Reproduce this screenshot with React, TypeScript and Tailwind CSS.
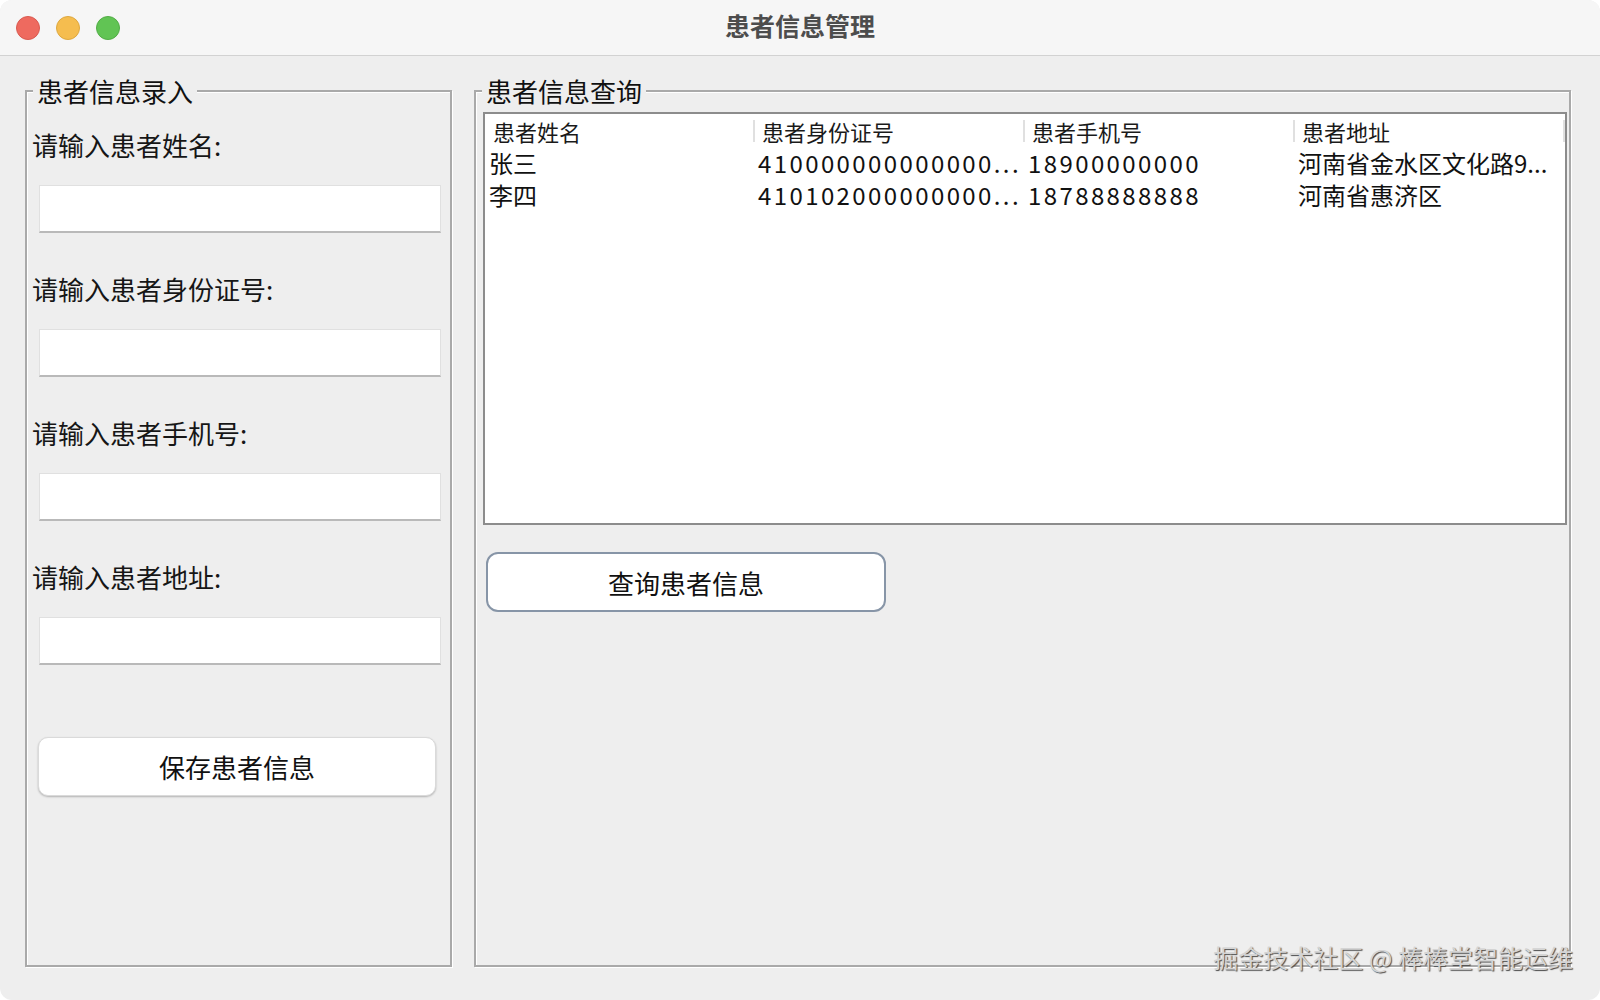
import React from "react";

const fields = ["请输入患者姓名:", "请输入患者身份证号:", "请输入患者手机号:", "请输入患者地址:"];

const columns = ["患者姓名", "患者身份证号", "患者手机号", "患者地址"];

const rows = [
  ["张三", "410000000000000...", "18900000000", "河南省金水区文化路9..."],
  ["李四", "410102000000000...", "18788888888", "河南省惠济区"],
];

function TrafficLights() {
  return (
    <div className="flex items-center gap-[16px] pl-[16px]">
      <span className="h-[24px] w-[24px] rounded-full bg-[#ee6a5f] border border-[#d95a50]" />
      <span className="h-[24px] w-[24px] rounded-full bg-[#f5bd4f] border border-[#dea83f]" />
      <span className="h-[24px] w-[24px] rounded-full bg-[#61c454] border border-[#52ad46]" />
    </div>
  );
}

function GroupTitle({ children }: { children: React.ReactNode }) {
  return (
    <span className="absolute left-[6px] top-[-16px] bg-[#eeeeee] px-[4px] text-[26px] leading-[30px] text-[#111]">
      {children}
    </span>
  );
}

function EntryPanel() {
  return (
    <div className="relative w-[427px] shrink-0 border-2 border-[#a9a9a9] shadow-[1px_1px_0_#fff,inset_1px_1px_0_#fff]">
      <GroupTitle>患者信息录入</GroupTitle>
      <div className="flex flex-col pl-[5px] pt-[38px]">
        {fields.map((label, i) => (
          <div key={label} className={i > 0 ? "mt-[41px]" : ""}>
            <div className="text-[26px] leading-[30px] text-[#161616]">{label}</div>
            <div className="ml-[7px] mt-[25px] h-[48px] w-[402px] border border-[#e0e0e0] border-b-2 border-b-[#b9b9b9] bg-white" />
          </div>
        ))}
        <button className="ml-[6px] mt-[72px] flex h-[59px] w-[398px] items-center justify-center rounded-[10px] border border-[#dadada] bg-white text-[26px] text-[#111] shadow-[0_1px_2px_rgba(0,0,0,0.25)]">
          保存患者信息
        </button>
      </div>
    </div>
  );
}

function QueryPanel() {
  return (
    <div className="relative flex-1 border-2 border-[#a9a9a9] shadow-[1px_1px_0_#fff,inset_1px_1px_0_#fff]">
      <GroupTitle>患者信息查询</GroupTitle>
      <div className="ml-[7px] mt-[20px] h-[413px] w-[1084px] border-2 border-[#8c8c8c] bg-white">
        <div className="flex h-[33px] items-center">
          {columns.map((c, i) => (
            <div
              key={c}
              className={`flex w-[270px] items-center justify-between ${i === 0 ? "pl-[8px]" : "pl-[7px]"}`}
            >
              <span className="text-[22px] leading-[26px] text-[#1a1a1a]">{c}</span>
              <span className="h-[22px] w-[2px] bg-[#e0e0e0]" />
            </div>
          ))}
        </div>
        {rows.map((r) => (
          <div key={r[0]} className="flex h-[32px] items-center">
            {r.map((cell, j) => (
              <div
                key={j}
                className={`w-[270px] shrink-0 whitespace-nowrap text-[24px] leading-[32px] text-[#111] ${
                  j === 0 ? "pl-[4px]" : "pl-[3px]"
                } ${j === 1 || j === 2 ? "tracking-[2.4px]" : ""}`}
              >
                {cell}
              </div>
            ))}
          </div>
        ))}
      </div>
      <button className="ml-[10px] mt-[27px] flex h-[60px] w-[400px] items-center justify-center rounded-[12px] border-2 border-[#8795a7] bg-white text-[26px] text-[#111]">
        查询患者信息
      </button>
    </div>
  );
}

export default function App() {
  return (
    <div className="h-[1000px] w-[1600px] bg-white font-['Noto_Sans_CJK_SC',sans-serif]">
      <div className="relative flex h-full w-full flex-col overflow-hidden rounded-[12px] bg-[#eeeeee]">
        <div className="grid h-[56px] shrink-0 grid-cols-[1fr_auto_1fr] items-center border-b border-[#d2d2d2] bg-[#f6f6f6]">
          <TrafficLights />
          <div className="pb-[4px] text-[25px] font-bold text-[#4d4d4d]">患者信息管理</div>
          <div />
        </div>
        <div className="flex flex-1 gap-[22px] pb-[33px] pl-[25px] pr-[29px] pt-[34px]">
          <EntryPanel />
          <QueryPanel />
        </div>
        <div className="absolute bottom-[27px] right-[27px] text-[25px] leading-[32px] text-[#d4d4d4] [text-shadow:1px_1px_1px_#4a4a4a]">
          掘金技术社区 @ 棒棒堂智能运维
        </div>
      </div>
    </div>
  );
}
